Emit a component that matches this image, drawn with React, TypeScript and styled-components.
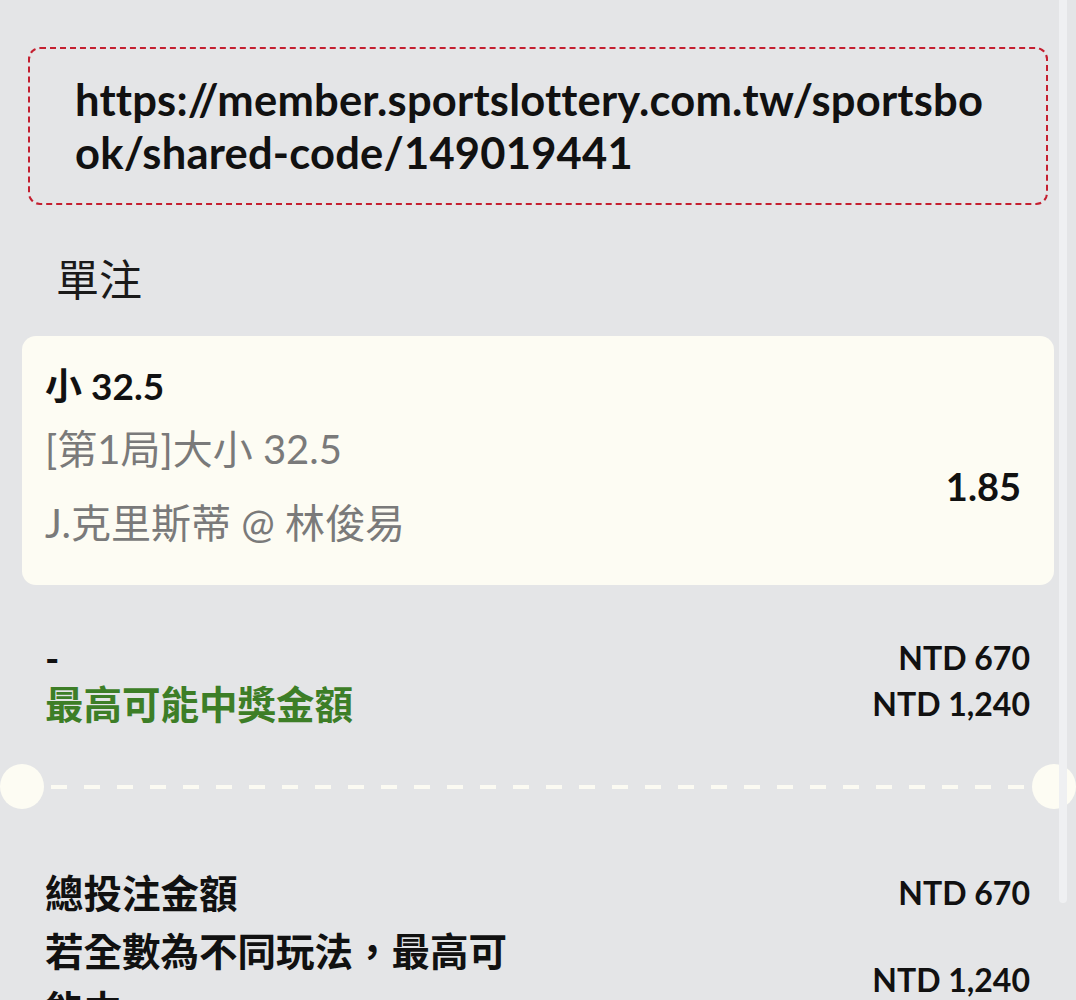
import React from "react";
import styled, { createGlobalStyle } from "styled-components";

const GlobalStyle = createGlobalStyle`
    html, body {
        margin: 0;
        padding: 0;
        background: #e4e5e7;
    }
    body {
        font-family: Lato, "Noto Sans CJK TC", sans-serif;
        color: #111;
        -webkit-font-smoothing: antialiased;
    }
`

const Page = styled.div`
    position: relative;
    height: 1000px;
    padding: 0 22px;
    overflow: hidden;
`
const ScrollTrack = styled.div`
    position: absolute;
    top: -10px;
    right: 9px;
    width: 8px;
    height: 913px;
    border-radius: 4px;
    background: #eff0f2;
`
const LinkBox = styled.div`
    margin: 47px 6px 0;
    padding: 24px 48px 24px 45px;
    border: 2px dashed #c41f30;
    border-radius: 12px;
    font-size: 43.5px;
    font-weight: 700;
    letter-spacing: 0.2px;
    line-height: 53px;
    word-break: break-all;
`
const SectionTitle = styled.div`
    margin: 47px 0 0 34px;
    font-size: 43px;
    line-height: 56px;
    color: #1a1a1a;
`
const BetCard = styled.div`
    margin-top: 28px;
    padding: 24px 33px 25px 23px;
    background: #fdfcf3;
    border-radius: 14px;
`
const Selection = styled.div`
    font-size: 37px;
    font-weight: 700;
    line-height: 52px;
`
const BetBody = styled.div`
    display: flex;
    align-items: center;
    justify-content: space-between;
`
const BetInfo = styled.div`
    display: flex;
    flex-direction: column;
`
const InfoLine = styled.div`
    font-size: 40px;
    line-height: 74px;
    color: #7a7a7a;
`
const Odds = styled.div`
    font-size: 38px;
    font-weight: 700;
`
const Rows = styled.div<{ $top: number; $lh: number }>`
    margin-top: ${p => p.$top}px;
    padding: 0 24px 0 23px;
    line-height: ${p => p.$lh}px;
`
const Row = styled.div`
    display: flex;
    align-items: center;
    justify-content: space-between;
    gap: 40px;
`
const Label = styled.div<{ $green?: boolean; $narrow?: boolean }>`
    font-size: 38.5px;
    font-weight: 700;
    color: ${p => (p.$green ? "#3d7e27" : "#111")};
    max-width: ${p => (p.$narrow ? "480px" : "none")};
`
const Amount = styled.div`
    font-size: 32px;
    font-weight: 700;
    white-space: nowrap;
`
const Divider = styled.div`
    display: flex;
    align-items: center;
    margin: 37px -22px 0;
    height: 45px;
`
const Notch = styled.div`
    flex: 0 0 44px;
    height: 45px;
    border-radius: 50%;
    background: #fdfcf3;
`
const DashLine = styled.div`
    flex: 1;
    height: 4px;
    margin: 1px 7px 0;
    background: repeating-linear-gradient(
        to right,
        #fbfaf2 0 16px,
        transparent 16px 33px
    );
`

const App: React.FunctionComponent = () => {
    return (
        <Page>
            <GlobalStyle />
            <ScrollTrack />

            <LinkBox>
                https://member.sportslottery.com.tw/sportsbook/shared-code/149019441
            </LinkBox>

            <SectionTitle>單注</SectionTitle>

            <BetCard>
                <Selection>小 32.5</Selection>
                <BetBody>
                    <BetInfo>
                        <InfoLine>[第1局]大小 32.5</InfoLine>
                        <InfoLine>J.克里斯蒂 @ 林俊易</InfoLine>
                    </BetInfo>
                    <Odds>1.85</Odds>
                </BetBody>
            </BetCard>

            <Rows $top={50} $lh={46}>
                <Row>
                    <Label>-</Label>
                    <Amount>NTD 670</Amount>
                </Row>
                <Row>
                    <Label $green>最高可能中獎金額</Label>
                    <Amount>NTD 1,240</Amount>
                </Row>
            </Rows>

            <Divider>
                <Notch />
                <DashLine />
                <Notch />
            </Divider>

            <Rows $top={55} $lh={58}>
                <Row>
                    <Label>總投注金額</Label>
                    <Amount>NTD 670</Amount>
                </Row>
                <Row>
                    <Label $narrow>若全數為不同玩法，最高可能中:</Label>
                    <Amount>NTD 1,240</Amount>
                </Row>
            </Rows>
        </Page>
    )
}

export default App;
